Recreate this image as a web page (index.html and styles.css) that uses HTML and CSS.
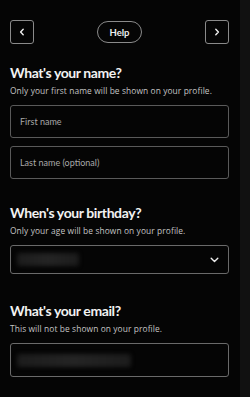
FILE: index.html
```html
<!DOCTYPE html>
<html lang="en">
<head>
    <meta charset="UTF-8">
    <meta name="viewport" content="width=device-width, initial-scale=1.0">
    <title>Profile setup</title>
    <link rel="stylesheet" href="styles.css">
</head>
<body>
    <div class="page">
        <div class="top-bar">
            <button class="nav-button" aria-label="Back">
                <svg width="8" height="8" viewBox="0 0 8 8"><path d="M5.2 1.2 2.6 4l2.6 2.8" fill="none" stroke="#eee" stroke-width="1.4" stroke-linecap="round" stroke-linejoin="round"/></svg>
            </button>
            <button class="help-button">Help</button>
            <button class="nav-button" aria-label="Next">
                <svg width="8" height="8" viewBox="0 0 8 8"><path d="M2.8 1.2 5.4 4 2.8 6.8" fill="none" stroke="#eee" stroke-width="1.4" stroke-linecap="round" stroke-linejoin="round"/></svg>
            </button>
        </div>

        <div class="section section-name">
            <h2>What's your name?</h2>
            <p class="hint">Only your first name will be shown on your profile.</p>
            <div class="field field-tall"><span class="placeholder">First name</span></div>
            <div class="field field-tall"><span class="placeholder">Last name (optional)</span></div>
        </div>

        <div class="section section-birthday">
            <h2>When's your birthday?</h2>
            <p class="hint">Only your age will be shown on your profile.</p>
            <div class="field field-select">
                <span class="blurred blurred-short"></span>
                <svg class="chevron" width="9" height="6" viewBox="0 0 9 6"><path d="M1.2 1.3 4.5 4.5 7.8 1.3" fill="none" stroke="#eee" stroke-width="1.4" stroke-linecap="round" stroke-linejoin="round"/></svg>
            </div>
        </div>

        <div class="section section-email">
            <h2>What's your email?</h2>
            <p class="hint">This will not be shown on your profile.</p>
            <div class="field field-email"><span class="blurred blurred-long"></span></div>
        </div>
    </div>
</body>
</html>
```
FILE: styles.css
```css
body, html {
    margin: 0;
    height: 100%;
    background-color: #111;
    font-family: Lato, "Open Sans", sans-serif;
}
.page {
    width: 240px;
    height: 100%;
    background-color: #050505;
    box-sizing: border-box;
    padding: 20px 11px 0 10px;
}
.top-bar {
    display: flex;
    justify-content: space-between;
    align-items: center;
    height: 24px;
}
.nav-button {
    width: 24px;
    height: 24px;
    padding: 0;
    background: none;
    border: 1.5px solid #8a8a8a;
    border-radius: 3px;
    display: flex;
    align-items: center;
    justify-content: center;
}
.help-button {
    width: 45px;
    height: 22px;
    padding: 0;
    background: none;
    border: 1.5px solid #8a8a8a;
    border-radius: 11px;
    color: #eee;
    font-family: inherit;
    font-size: 9.5px;
    font-weight: 700;
}
.section h2 {
    margin: 0;
    color: #f2f2f2;
    font-size: 14px;
    line-height: 16px;
    font-weight: 700;
    letter-spacing: -0.4px;
}
.hint {
    margin: 4px 0 9px;
    color: #c4c4c4;
    font-family: "Open Sans", sans-serif;
    font-size: 8.4px;
    line-height: 11px;
    letter-spacing: 0.1px;
    white-space: nowrap;
}
.section-name {
    margin-top: 21px;
}
.section-birthday {
    margin-top: 26px;
}
.section-email {
    margin-top: 29px;
}
.field {
    box-sizing: border-box;
    border: 1px solid #5a5a5a;
    border-radius: 3px;
    display: flex;
    align-items: center;
    padding: 0 9px;
}
.field-tall {
    height: 33px;
    margin-bottom: 8px;
}
.field-select {
    height: 29px;
    justify-content: space-between;
    padding: 0 9px 0 6px;
    border-color: #6a6a6a;
}
.field-email {
    height: 34px;
    padding-left: 6px;
    border-color: #6a6a6a;
}
.placeholder {
    color: #a8a8a8;
    font-size: 9px;
}
.blurred {
    height: 13px;
    border-radius: 3px;
    background: linear-gradient(90deg, #1c1c1c, #242424 50%, #1c1c1c);
    filter: blur(2px);
}
.blurred-short {
    width: 62px;
}
.blurred-long {
    width: 114px;
}
```
